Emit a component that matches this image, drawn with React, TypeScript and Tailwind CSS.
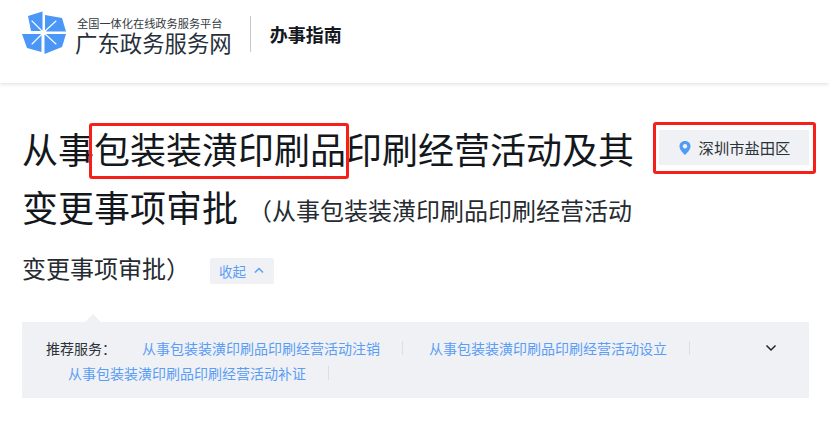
import React from "react";

const cjk = { fontFamily: '"Noto Sans CJK SC", "Noto Sans", sans-serif' };

function Logo() {
  return (
    <svg width="46" height="46" viewBox="0 0 46 46" className="shrink-0">
      <g fill="#4a97f7">
        <polygon points="7,5 21.5,0.5 21.5,20 10,20" />
        <polygon points="24,4 41,7 45,20.5 24,20.5" />
        <polygon points="1,23 20.5,23 20.5,41 6,37" />
        <polygon points="23.5,23 45,23 41,36 23.5,43" />
      </g>
      <g stroke="#ffffff" strokeWidth="1.1" strokeLinecap="round">
        <line x1="22.5" y1="21.5" x2="11" y2="10" />
        <line x1="22.5" y1="21.5" x2="35" y2="10" />
        <line x1="22.5" y1="21.5" x2="11" y2="33" />
        <line x1="22.5" y1="21.5" x2="35" y2="33" />
      </g>
      <circle cx="22.5" cy="21.5" r="2.6" fill="#ffffff" />
    </svg>
  );
}

function Item({ children }: { children: React.ReactNode }) {
  return (
    <span className="inline-block ml-[26px] pr-[22px] border-r border-[#dcdee2] text-[#5a9df6] text-[14px] leading-[14px] align-middle my-[4.5px]">
      {children}
    </span>
  );
}

export default function App() {
  return (
    <div className="w-[829px] h-[429px] overflow-hidden bg-white relative" style={cjk}>
      <header className="h-[83px] flex items-center pl-[21px] pb-[15px] bg-white shadow-[0_1px_4px_rgba(0,0,0,0.14)]">
        <Logo />
        <div className="ml-[8px] flex flex-col mt-[1px]">
          <span className="ml-[2px] text-[11.2px] leading-[14px] text-[#333a42] whitespace-nowrap">全国一体化在线政务服务平台</span>
          <span className="text-[22.4px] leading-[24px] text-[#27303a] whitespace-nowrap">广东政务服务网</span>
        </div>
        <div className="ml-[18px] w-px h-[36px] bg-[#c9c9c9]" />
        <span className="ml-[19px] text-[18px] font-bold text-[#14181d] whitespace-nowrap">办事指南</span>
      </header>

      <main className="pl-[22px] pr-[20px]">
        <div className="flex justify-between pt-[36px]">
          <div className="w-[625px]">
            <h1 className="text-[36px] leading-[58px] text-[#14181d] font-normal">
              从事包装装潢印刷品印刷经营活动及其变更事项审批
              <span className="ml-[10px] text-[24px] leading-[47px] align-[2px] text-[#262b31]">
                （从事包装装潢印刷品印刷经营活动变更事项审批）
              </span>
              <button className="ml-[20px] mt-[1px] inline-flex items-center align-middle h-[26px] w-[64px] pl-[9px] gap-[8px] rounded-[2px] bg-[#f0f1f4] text-[13.5px] text-[#5a9df6]">
                收起
                <svg width="10" height="7" viewBox="0 0 10 7" fill="none" stroke="#5a9df6" strokeWidth="1.5">
                  <path d="M1 5.5 L5 1.5 L9 5.5" />
                </svg>
              </button>
            </h1>
          </div>
          <div className="mt-[11px] w-[150px] h-[35px] shrink-0 flex items-center justify-center gap-[7px] bg-[#f0f1f4]">
            <svg width="14" height="16" viewBox="0 0 14 16">
              <path d="M7 1 C3.6 1 1.5 3.4 1.5 6.2 C1.5 9.6 5 13 7 15 C9 13 12.5 9.6 12.5 6.2 C12.5 3.4 10.4 1 7 1 Z" fill="#4f9bf8" />
              <circle cx="7" cy="6.2" r="2.2" fill="#f0f1f4" />
            </svg>
            <span className="text-[15.3px] text-[#2c3239] whitespace-nowrap">深圳市盐田区</span>
          </div>
        </div>

        <div className="relative mt-[29px] h-[76px] w-[787px] bg-[#f0f1f4] pl-[20px] pt-[12px]">
          <div className="absolute left-[63px] top-[-8px] w-0 h-0 border-l-[8px] border-r-[8px] border-b-[8px] border-l-transparent border-r-transparent border-b-[#f0f1f4]" />
          <div className="w-[740px] leading-[23px]">
            <span className="ml-[4px] inline-block w-[70px] text-[14px] leading-[14px] my-[4.5px] align-middle text-[#2c3239]">推荐服务：</span>
            <Item>从事包装装潢印刷品印刷经营活动注销</Item>
            <Item>从事包装装潢印刷品印刷经营活动设立</Item>
            <Item>从事包装装潢印刷品印刷经营活动补证</Item>
          </div>
          <svg className="absolute right-[32px] top-[22px]" width="12" height="8" viewBox="0 0 12 8" fill="none" stroke="#1f2329" strokeWidth="1.5">
            <path d="M1.5 1.5 L6 6 L10.5 1.5" />
          </svg>
        </div>
      </main>

      <div className="absolute left-[89px] top-[123px] w-[260px] h-[56px] rounded-[3px] border-[3px] border-[#f5201a]" />
      <div className="absolute left-[653px] top-[122px] w-[163px] h-[52px] rounded-[3px] border-[3px] border-[#f5201a]" />
    </div>
  );
}
